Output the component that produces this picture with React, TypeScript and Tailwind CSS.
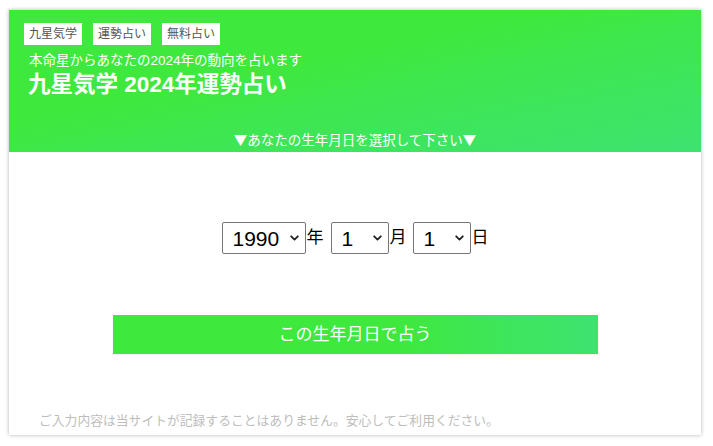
const Chevron = () => (
  <svg
    className="pointer-events-none absolute right-[7px] top-1/2 -translate-y-1/2 w-[9px] h-[6px]"
    viewBox="0 0 9 6"
    fill="none"
    stroke="#222"
    strokeWidth={1.8}
    strokeLinecap="round"
    strokeLinejoin="round"
  >
    <path d="M1.2 1.3 L4.5 4.6 L7.8 1.3" />
  </svg>
);

const DateSelect = ({
  value,
  options,
  width,
}: {
  value: string;
  options: string[];
  width: string;
}) => (
  <div className={`relative ${width} h-[32px]`}>
    <select
      defaultValue={value}
      className="appearance-none w-full h-full border border-[#767676] rounded-[2px] bg-white pl-[10px] text-[21px] leading-none text-black outline-none"
    >
      {options.map((o) => (
        <option key={o} value={o}>
          {o}
        </option>
      ))}
    </select>
    <Chevron />
  </div>
);

export default function App() {
  const years = Array.from({ length: 80 }, (_, i) => String(1940 + i));
  const months = Array.from({ length: 12 }, (_, i) => String(i + 1));
  const days = Array.from({ length: 31 }, (_, i) => String(i + 1));
  const tags = ["九星気学", "運勢占い", "無料占い"];

  return (
    <div
      className="w-[713px] h-[446px] bg-white pt-[10px] pl-[9px]"
      style={{ fontFamily: '"Liberation Sans", "Noto Sans CJK JP", sans-serif' }}
    >
      <div className="w-[692px] h-[425px] bg-white shadow-[0_0_4px_rgba(0,0,0,0.3)] flex flex-col">
        {/* Header */}
        <div className="h-[142px] bg-gradient-to-br from-[#3fe83d] from-40% to-[#3de36f] px-[15px] pt-[13px] flex flex-col text-white">
          <div className="flex gap-[11px]">
            {tags.map((t) => (
              <span
                key={t}
                className="bg-white text-[#555] text-[12px] h-[22px] leading-[22px] px-[5px]"
              >
                {t}
              </span>
            ))}
          </div>
          <p className="mt-[7px] pl-[5px] text-[13.5px] leading-[18px]">
            本命星からあなたの2024年の動向を占います
          </p>
          <h1 className="pl-[4px] text-[22.5px] font-bold leading-[30px]">
            九星気学 2024年運勢占い
          </h1>
          <p className="mt-auto mb-[4px] text-center text-[13.5px] leading-[18px] [font-family:'Noto_Sans_CJK_JP',sans-serif]">
            ▼あなたの生年月日を選択して下さい▼
          </p>
        </div>

        {/* Body */}
        <div className="flex-1 flex flex-col items-center">
          <div className="mt-[70px] flex items-center text-[17px] text-black">
            <DateSelect value="1990" options={years} width="w-[84px]" />
            <span className="ml-[1px] mr-[7px]">年</span>
            <DateSelect value="1" options={months} width="w-[58px]" />
            <span className="ml-[1px] mr-[6px]">月</span>
            <DateSelect value="1" options={days} width="w-[58px]" />
            <span className="ml-[1px]">日</span>
          </div>

          <button className="mt-[61px] w-[485px] h-[39px] bg-gradient-to-r from-[#3fe83d] from-60% to-[#3de36f] text-white text-[17px] shadow-[0_1px_2px_rgba(0,0,0,0.08)]">
            この生年月日で占う
          </button>

          <p className="mt-auto mb-[5px] self-start pl-[30px] text-[12.8px] leading-[18px] text-[#bdbdbd]">
            ご入力内容は当サイトが記録することはありません。安心してご利用ください。
          </p>
        </div>
      </div>
    </div>
  );
}
